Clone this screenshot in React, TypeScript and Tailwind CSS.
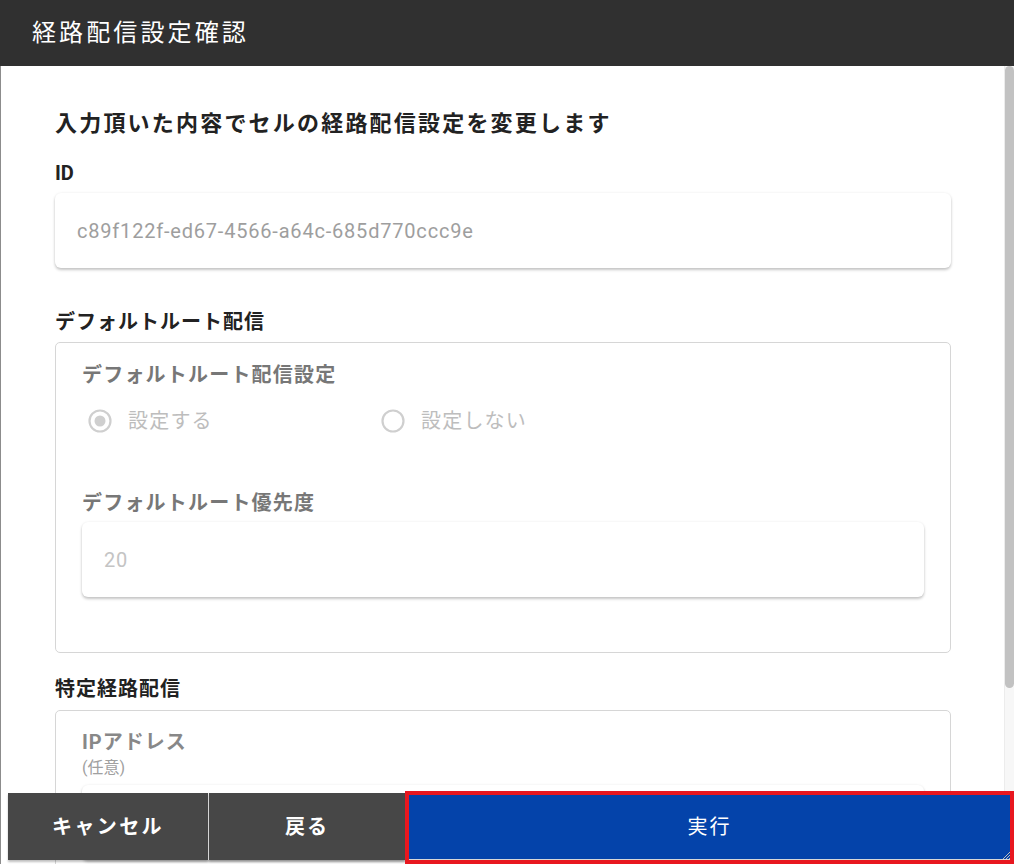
import React from 'react';

const FONT = "font-[Roboto,'Noto_Sans_CJK_JP',sans-serif]";

function Field({ value, muted }: { value: string; muted?: boolean }) {
  return (
    <div className="h-[75px] rounded-[6px] bg-white flex items-center px-[22px] shadow-[0_2px_3px_rgba(0,0,0,0.22),0_0_3px_rgba(0,0,0,0.06)]">
      <span className={`text-[20px] tracking-[0.04em] ${muted ? 'text-[#c4c4c4]' : 'text-[#9e9e9e]'}`}>{value}</span>
    </div>
  );
}

function Radio({ label, checked }: { label: string; checked?: boolean }) {
  return (
    <div className="w-[293px] flex items-center gap-[15px]">
      <svg width="26" height="26" viewBox="0 0 26 26">
        <circle cx="13" cy="13" r="10.5" fill="none" stroke="#cfcfcf" strokeWidth="2.2" />
        {checked && <circle cx="13" cy="13" r="5.5" fill="#cfcfcf" />}
      </svg>
      <span className="text-[20px] leading-[26px] tracking-[0.06em] text-[#bdbdbd]">{label}</span>
    </div>
  );
}

export default function App() {
  return (
    <div className={`relative w-[1014px] h-[864px] overflow-hidden bg-white ${FONT}`}>
      <header className="h-[66px] bg-[#303030] flex items-center pl-[32px]">
        <h1 className="text-white text-[24px] tracking-[0.13em] leading-none">経路配信設定確認</h1>
      </header>

      <div className="flex h-[798px]">
        <div className="w-px bg-[#8c8c8c]" />

        <main className="flex-1 pl-[54px] pr-[53px] text-[#222]">
          <p className="mt-[42px] text-[22px] leading-[32px] tracking-[0.1em] font-bold">
            入力頂いた内容でセルの経路配信設定を変更します
          </p>

          <div className="mt-[21px] text-[20px] leading-[24px] font-bold">ID</div>
          <div className="mt-[8px]">
            <Field value="c89f122f-ed67-4566-a64c-685d770ccc9e" />
          </div>

          <div className="mt-[42px] text-[20px] leading-[24px] tracking-[0.05em] font-bold">デフォルトルート配信</div>
          <section className="mt-[8px] border border-[#d6d6d6] rounded-[5px] px-[26px] pt-[19px] pb-[55px]">
            <div className="text-[20px] leading-[26px] tracking-[0.06em] font-bold text-[#777]">デフォルトルート配信設定</div>
            <div className="mt-[20px] flex pl-[5px]">
              <Radio label="設定する" checked />
              <Radio label="設定しない" />
            </div>
            <div className="mt-[56px] text-[20px] leading-[26px] tracking-[0.06em] font-bold text-[#777]">デフォルトルート優先度</div>
            <div className="mt-[6px]">
              <Field value="20" muted />
            </div>
          </section>

          <div className="mt-[24px] text-[20px] leading-[24px] tracking-[0.05em] font-bold">特定経路配信</div>
          <section className="mt-[9px] border border-[#d6d6d6] rounded-[5px] px-[26px] pt-[18px] pb-[40px]">
            <div className="text-[20px] leading-[26px] tracking-[0.05em] font-bold text-[#888]">IPアドレス</div>
            <div className="mt-[4px] text-[16px] leading-[18px] text-[#a0a0a0]">(任意)</div>
            <div className="mt-[8px]">
              <Field value="" />
            </div>
          </section>
        </main>

        <div className="w-[10px] flex flex-col bg-[#f7f7f7] border-l border-[#ececec]">
          <div className="w-[9px] h-[622px] rounded-full bg-[#c2c2c2]" />
        </div>
      </div>

      <footer className="absolute left-0 right-0 bottom-0 h-[73px] flex pl-[8px]">
        <button className="mt-[2px] w-[200px] h-[67px] bg-[#474747] text-white text-[20px] font-bold tracking-[0.12em] shadow-[0_2px_2px_rgba(0,0,0,0.25)]">
          キャンセル
        </button>
        <div className="mt-[2px] w-px h-[67px] bg-[#e8e8e8]" />
        <button className="mt-[2px] w-[196px] h-[67px] bg-[#474747] text-white text-[20px] font-bold tracking-[0.1em] shadow-[0_2px_2px_rgba(0,0,0,0.25)]">
          戻る
        </button>
        <div className="flex-1 h-full border-[4px] border-[#e8171f] bg-[#d8d8d8] flex flex-col">
          <div className="relative flex-1 bg-[#0443aa] flex items-center justify-center text-white text-[20px] tracking-[0.1em]">
            実行
            <svg className="absolute right-0 bottom-0" width="8" height="8" viewBox="0 0 8 8">
              <path d="M8 1 L1 8 M8 4 L4 8 M8 7 L7 8" stroke="#bdbdbd" strokeWidth="1" />
            </svg>
          </div>
          <div className="h-px" />
        </div>
      </footer>
    </div>
  );
}
